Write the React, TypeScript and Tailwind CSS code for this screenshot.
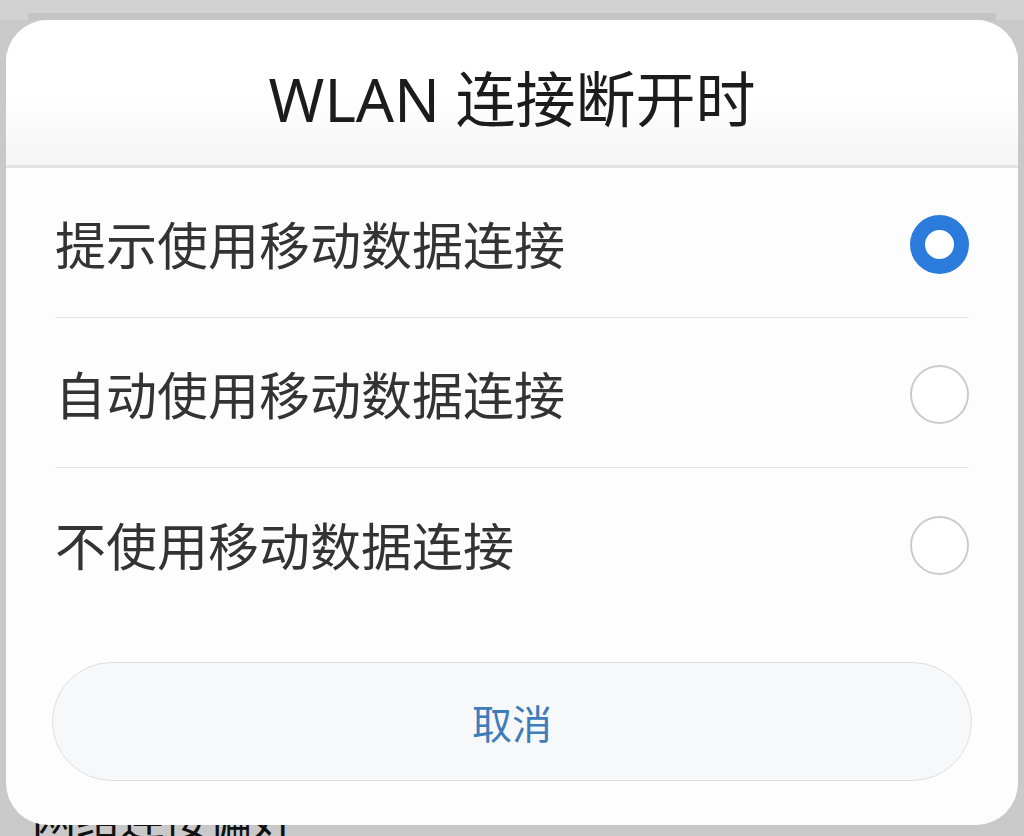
import React from 'react';

const options = ['提示使用移动数据连接', '自动使用移动数据连接', '不使用移动数据连接'];

function Radio({ checked }: { checked: boolean }) {
  if (checked) {
    return <div className="w-[59px] h-[59px] rounded-full border-[15px] border-[#2a7bdc] bg-white shrink-0" />;
  }
  return <div className="w-[59px] h-[59px] rounded-full border-2 border-[#cbcbcb] bg-white shrink-0" />;
}

export default function App() {
  const [selected, setSelected] = React.useState(0);

  return (
    <div
      className="w-[1024px] h-[836px] overflow-hidden bg-[#c9c9c9] flex flex-col"
      style={{ fontFamily: '"Noto Sans", "Noto Sans CJK SC", sans-serif' }}
    >
      <div className="h-[20px] shrink-0 bg-[#d2d2d2] flex flex-col justify-end">
        <div className="h-[7px] mx-[28px] bg-[#c4c4c4]" />
      </div>

      <div className="relative z-10 mx-[6px] h-[805px] shrink-0 bg-[#fdfdfd] rounded-[42px] flex flex-col overflow-hidden">
        <div className="h-[148px] shrink-0 flex items-center justify-center border-b-[3px] border-[#e2e2e2] bg-gradient-to-b from-white via-white to-[#f5f5f5]">
          <h1 className="text-[60px] leading-none text-[#1c1c1c] pt-[12px]">WLAN 连接断开时</h1>
        </div>

        {options.map((label, idx) => (
          <div
            key={idx}
            onClick={() => setSelected(idx)}
            className={`mx-[49px] h-[150px] shrink-0 flex items-center justify-between ${
              idx < options.length - 1 ? 'border-b border-[#e4e4e4]' : ''
            }`}
          >
            <span className="text-[51px] leading-none text-[#333333] pt-[6px]">{label}</span>
            <div className="pt-[4px]">
              <Radio checked={selected === idx} />
            </div>
          </div>
        ))}

        <div className="mt-[44px] mx-[46px] h-[119px] shrink-0 rounded-full border border-[#dedede] bg-[#f7f8f9] flex items-center justify-center">
          <span className="text-[40px] leading-none text-[#3f7cba] pt-[4px]">取消</span>
        </div>
      </div>

      <div className="-mt-[28px] pl-[32px] text-[44px] leading-none text-[#111111]">网络连接偏好</div>
    </div>
  );
}
